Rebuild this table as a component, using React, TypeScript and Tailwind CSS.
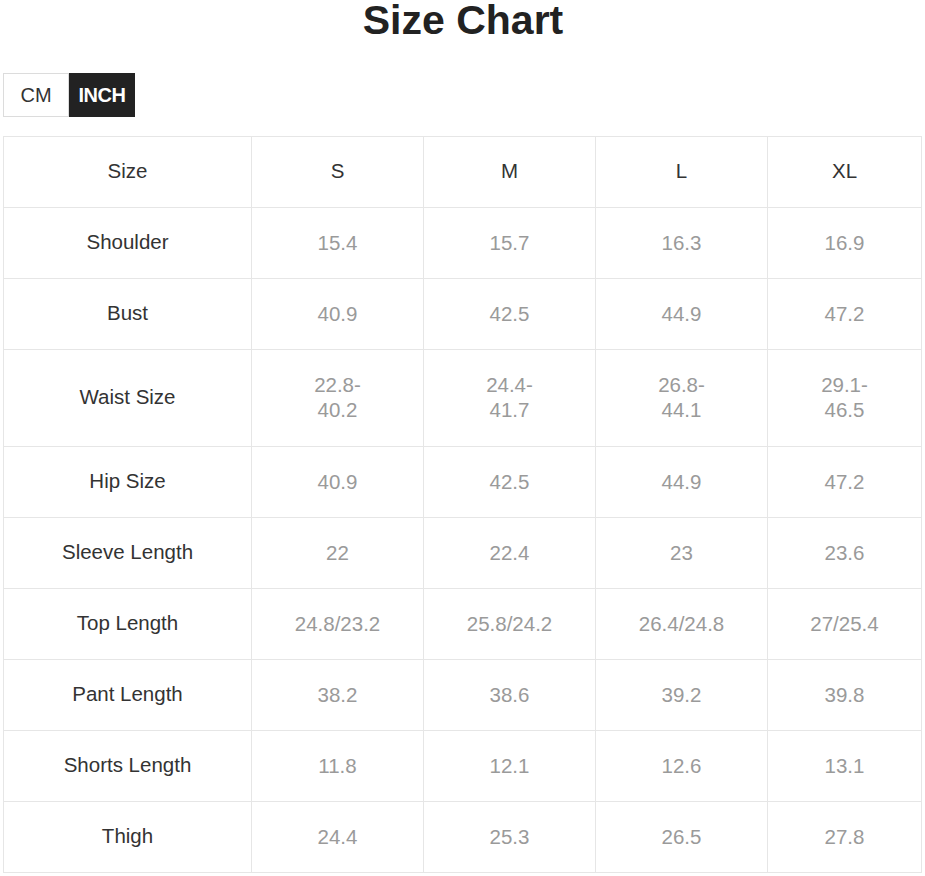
import React from "react";

const rows: [string, string[]][] = [
  ["Shoulder", ["15.4", "15.7", "16.3", "16.9"]],
  ["Bust", ["40.9", "42.5", "44.9", "47.2"]],
  ["Waist Size", ["22.8-\n40.2", "24.4-\n41.7", "26.8-\n44.1", "29.1-\n46.5"]],
  ["Hip Size", ["40.9", "42.5", "44.9", "47.2"]],
  ["Sleeve Length", ["22", "22.4", "23", "23.6"]],
  ["Top Length", ["24.8/23.2", "25.8/24.2", "26.4/24.8", "27/25.4"]],
  ["Pant Length", ["38.2", "38.6", "39.2", "39.8"]],
  ["Shorts Length", ["11.8", "12.1", "12.6", "13.1"]],
  ["Thigh", ["24.4", "25.3", "26.5", "27.8"]],
];

export default function App() {
  return (
    <div className="w-[925px] h-[876px] bg-white overflow-hidden" style={{ fontFamily: '"Liberation Sans", Arial, sans-serif' }}>
      <h1 className="text-center text-[41px] font-bold leading-[40px] text-[#222] pt-[0px] pl-[1px]">Size Chart</h1>
      <div className="flex ml-[3px] mt-[33px] h-[44px]">
        <div className="w-[66px] border border-[#dcdcdc] flex items-center justify-center text-[20px] text-[#333]">CM</div>
        <div className="w-[66px] bg-[#222] flex items-center justify-center text-[20px] font-bold text-white tracking-[-0.5px]">INCH</div>
      </div>
      <table className="ml-[3px] mt-[19px] border-collapse table-fixed w-[918px]">
        <colgroup>
          <col className="w-[248px]" />
          <col className="w-[172px]" />
          <col className="w-[172px]" />
          <col className="w-[172px]" />
          <col className="w-[154px]" />
        </colgroup>
        <tbody>
          <tr className="h-[71px]">
            {["Size", "S", "M", "L", "XL"].map((h) => (
              <td key={h} className="border border-[#e6e6e6] text-center text-[20.5px] leading-[24px] text-[#333] pb-[2px]">{h}</td>
            ))}
          </tr>
          {rows.map(([label, vals]) => (
            <tr key={label} className={label === "Waist Size" ? "h-[97px]" : "h-[71px]"}>
              <td className="border border-[#e6e6e6] text-center text-[20.5px] leading-[24px] text-[#333] pb-[2px]">{label}</td>
              {vals.map((v, i) => (
                <td key={i} className="border border-[#e6e6e6] text-center text-[20.5px] leading-[25px] text-[#9a9a9a] whitespace-pre-line pb-[2px]">{v}</td>
              ))}
            </tr>
          ))}
        </tbody>
      </table>
    </div>
  );
}
